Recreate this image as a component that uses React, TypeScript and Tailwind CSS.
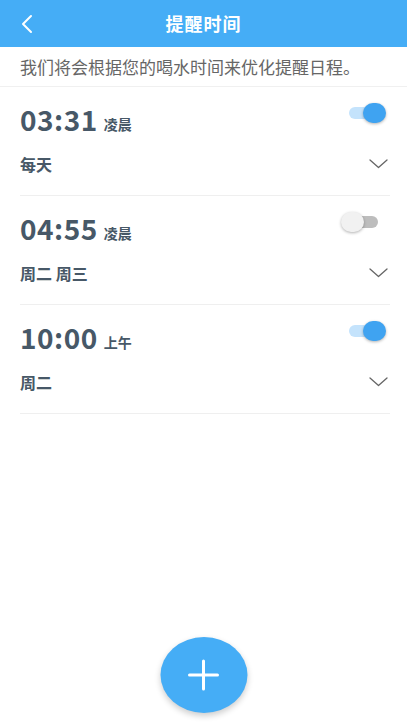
import React from "react";

const font = { fontFamily: '"Noto Sans CJK SC", "Noto Sans", sans-serif' };

function Toggle({ on }: { on: boolean }) {
  return (
    <div className="relative w-[46px] h-[20px] shrink-0">
      <div
        className={
          "absolute left-[8px] top-[4px] w-[29px] h-[12px] rounded-full " +
          (on ? "bg-[#c4e3fc]" : "bg-[#bdbdbd]")
        }
      />
      <div
        className={
          "absolute top-0 w-[23px] h-[20px] rounded-full shadow-[0_1px_3px_rgba(0,0,0,0.3)] " +
          (on ? "left-[22px] bg-[#3fa3f1]" : "left-0 bg-[#f1f1f1]")
        }
      />
    </div>
  );
}

function Chevron() {
  return (
    <svg width="19" height="10" viewBox="0 0 19 10" className="block">
      <path d="M1 1 L9.5 8.5 L18 1" fill="none" stroke="#666" strokeWidth="1.3" strokeLinecap="round" strokeLinejoin="round" />
    </svg>
  );
}

function Item({ time, period, days, on }: { time: string; period: string; days: string; on: boolean }) {
  return (
    <div className="ml-5 mr-[17px] h-[109px] border-b border-[#efefef] flex flex-col">
      <div className="flex justify-between items-start pt-[16px] pr-[2px]">
        <div className="mt-[0px] flex items-baseline leading-[32px] text-[#475867]">
          <span className="text-[28px] font-bold tracking-[0.5px]">{time}</span>
          <span className="ml-[6px] text-[14px] font-bold relative -top-[1px]">{period}</span>
        </div>
        <div className="mr-[1px]">
          <Toggle on={on} />
        </div>
      </div>
      <div className="mt-[11px] flex items-center justify-between h-[24px] pr-[2px]">
        <span className="text-[16px] font-bold text-[#475867] leading-[24px]">{days}</span>
        <Chevron />
      </div>
    </div>
  );
}

export default function App() {
  return (
    <div className="relative w-full h-[728px] bg-white overflow-hidden" style={font}>
      <div className="h-[47px] bg-[#45adf6] grid grid-cols-[1fr_auto_1fr] items-center">
        <div className="pl-[20px]">
          <svg width="14" height="20" viewBox="0 0 14 20" className="block">
            <path d="M11 2 L3 10 L11 18" fill="none" stroke="#fff" strokeWidth="2" strokeLinecap="round" strokeLinejoin="round" />
          </svg>
        </div>
        <div className="text-white text-[18px] font-bold tracking-[1px]">提醒时间</div>
        <div />
      </div>
      <div className="h-[40px] px-5 flex items-center border-b border-[#f0f0f0] text-[17px] text-[#666] leading-none">
        我们将会根据您的喝水时间来优化提醒日程。
      </div>
      <Item time="03:31" period="凌晨" days="每天" on={true} />
      <Item time="04:55" period="凌晨" days="周二 周三" on={false} />
      <Item time="10:00" period="上午" days="周二" on={true} />
      <button className="absolute left-1/2 -translate-x-1/2 bottom-[15px] w-[87px] h-[76px] rounded-[50%] bg-[#45adf6] shadow-[0_3px_6px_rgba(0,0,0,0.2)] flex items-center justify-center">
        <svg width="34" height="34" viewBox="0 0 34 34" className="block">
          <path d="M17 3 V31 M3 17 H31" stroke="#fff" strokeWidth="3" strokeLinecap="round" />
        </svg>
      </button>
    </div>
  );
}
